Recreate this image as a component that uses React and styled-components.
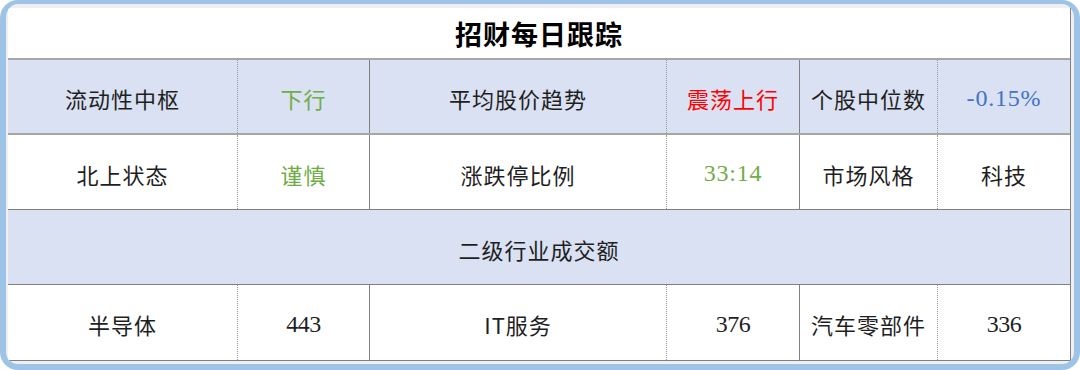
import styled, { createGlobalStyle } from "styled-components";

const GlobalStyle = createGlobalStyle`
  html, body {
    margin: 0;
    padding: 0;
    background: #ffffff;
  }
  * {
    box-sizing: border-box;
  }
`;

const CJK = `"Noto Sans CJK SC", "Noto Sans", sans-serif`;

const colors = {
  green: "#70ad47",
  red: "#ff0000",
  blue: "#4472c4",
  text: "#1f1f1f",
};

// per font: family, size, letter spacing
const fonts = {
  cjk: [CJK, 22, 1],
  serif: [`"Liberation Serif", ${CJK}`, 24, -0.5],
  num: [`"Liberation Serif", ${CJK}`, 24, 0.8],
};

const Frame = styled.div`
  width: 1080px;
  height: 370px;
  border-style: solid;
  border-color: #9dc3e6;
  border-width: 4px 6px 6px 6px;
  border-radius: 18px;
  background: #efefef;
  padding: 4px 3px 3px 2px;
  overflow: hidden;
`;

const Table = styled.div`
  display: flex;
  flex-direction: column;
  background: #ffffff;
  border-right: 1px solid #808080;
`;

const Row = styled.div`
  display: grid;
  grid-template-columns: 230px 132px 297px 133px 138px 132px;
  height: ${(p) => p.$height}px;
  background: ${(p) => (p.$shaded ? "#d9e1f2" : "#ffffff")};
  border-bottom: ${(p) => p.$line}px solid ${(p) => (p.$line > 1 ? "#a6a6a6" : "#808080")};
`;

const Cell = styled.div`
  display: flex;
  align-items: center;
  justify-content: center;
  padding-top: 3px;
  font-family: ${(p) => fonts[p.$font || "cjk"][0]};
  font-size: ${(p) => fonts[p.$font || "cjk"][1]}px;
  letter-spacing: ${(p) => fonts[p.$font || "cjk"][2]}px;
  color: ${(p) => colors[p.$tone || "text"]};
  border-right: ${(p) =>
    p.$divider === "dotted"
      ? "1px dotted #9a9a9a"
      : p.$divider === "solid"
      ? "1px solid #808080"
      : "none"};
`;

const WideCell = styled(Cell)`
  grid-column: 1 / -1;
  border-right: none;
`;

const Title = styled(WideCell)`
  font-size: 27px;
  font-weight: 700;
  letter-spacing: 1px;
  color: #000000;
  padding-top: 0;
`;

const dividers = ["dotted", "solid", "dotted", "solid", "dotted", "none"];

const rows = [
  {
    shaded: true,
    height: 75,
    line: 2,
    cells: [
      { text: "流动性中枢" },
      { text: "下行", tone: "green" },
      { text: "平均股价趋势" },
      { text: "震荡上行", tone: "red" },
      { text: "个股中位数" },
      { text: "-0.15%", tone: "blue", font: "num" },
    ],
  },
  {
    shaded: false,
    height: 75,
    line: 1,
    cells: [
      { text: "北上状态" },
      { text: "谨慎", tone: "green" },
      { text: "涨跌停比例" },
      { text: "33:14", tone: "green", font: "num" },
      { text: "市场风格" },
      { text: "科技" },
    ],
  },
];

const sectors = [
  { text: "半导体" },
  { text: "443", font: "serif" },
  { text: "IT服务" },
  { text: "376", font: "serif" },
  { text: "汽车零部件" },
  { text: "336", font: "serif" },
];

const App = () => {
  return (
    <>
      <GlobalStyle />
      <Frame>
        <Table>
          <Row $height={52} $line={2}>
            <Title>招财每日跟踪</Title>
          </Row>
          {rows.map((row, r) => (
            <Row key={r} $shaded={row.shaded} $height={row.height} $line={row.line}>
              {row.cells.map((cell, i) => (
                <Cell key={i} $divider={dividers[i]} $tone={cell.tone} $font={cell.font}>
                  {cell.text}
                </Cell>
              ))}
            </Row>
          ))}
          <Row $shaded $height={75} $line={1}>
            <WideCell>二级行业成交额</WideCell>
          </Row>
          <Row $height={76} $line={1}>
            {sectors.map((cell, i) => (
              <Cell key={i} $divider={dividers[i]} $font={cell.font}>
                {cell.text}
              </Cell>
            ))}
          </Row>
        </Table>
      </Frame>
    </>
  );
};

export default App;
